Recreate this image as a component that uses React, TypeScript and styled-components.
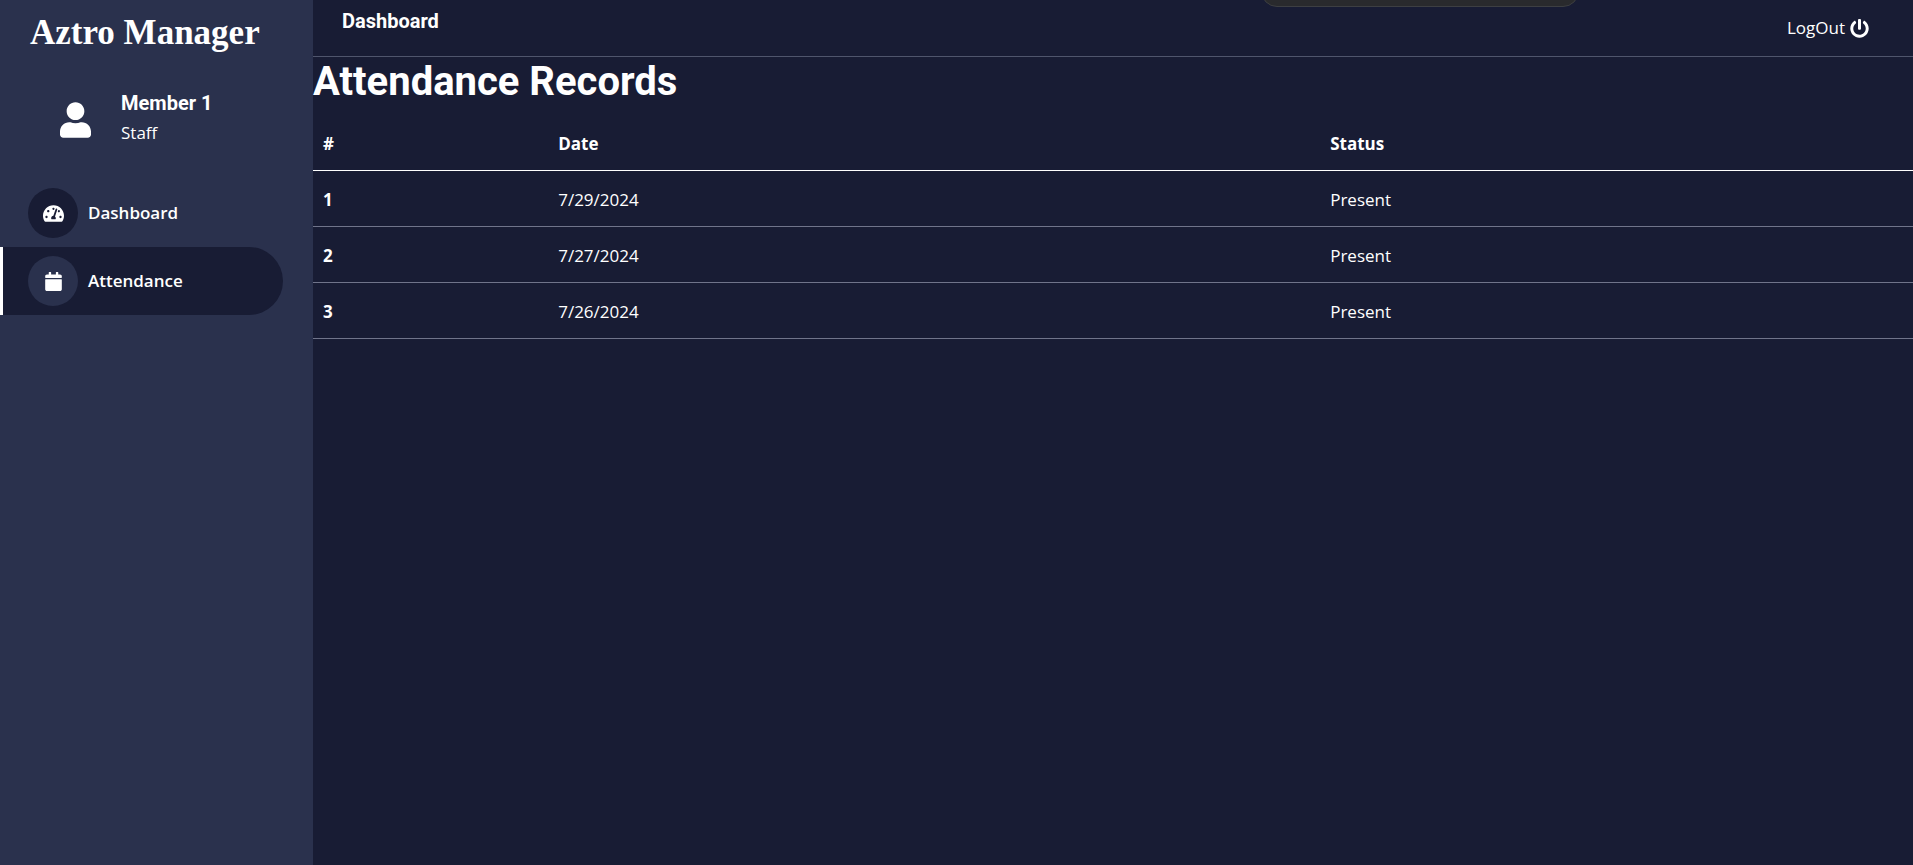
import React from 'react';
import styled, { createGlobalStyle } from 'styled-components';
import { FaUser, FaTachometerAlt, FaCalendar, FaPowerOff } from 'react-icons/fa';

const ink = '#181c34';
const panel = '#2a314d';
const bodyFont = '"Segoe UI", "Open Sans", "Noto Sans", sans-serif';
const headingFont = 'Roboto, sans-serif';

const GlobalStyle = createGlobalStyle`
  *, *::before, *::after { box-sizing: border-box; }
  body {
    margin: 0;
    background: ${ink};
    color: #fff;
    font: 400 17px/26px ${bodyFont};
  }
  h1, h2, h3, p, ul { margin: 0; padding: 0; }
  a { color: inherit; text-decoration: none; }
`;

const Layout = styled.div`
  display: grid;
  grid-template-columns: 313px minmax(0, 1fr);
  min-height: 100vh;
`;

const Sidebar = styled.aside`
  background: ${panel};
`;

const Brand = styled.h2`
  padding: 13px 0 0 30px;
  font: 700 35px/40px "Times New Roman", "Liberation Serif", serif;
`;

const Profile = styled.div`
  display: flex;
  align-items: center;
  gap: 30px;
  padding: 35px 0 0 60px;
`;

const Avatar = styled(FaUser)`
  width: 31px;
  height: 36px;
  margin-top: 4px;
`;

const MemberName = styled.h3`
  font: 700 20px/30px ${headingFont};
`;

const Role = styled.p`
  line-height: 30px;
`;

const Menu = styled.ul`
  padding: 31px 30px 0 0;
  list-style: none;
`;

const MenuLink = styled.a<{ $active?: boolean }>`
  display: flex;
  align-items: center;
  gap: 10px;
  height: 68px;
  padding-left: 25px;
  border-left: 3px solid ${(p) => (p.$active ? '#fff' : 'transparent')};
  border-radius: 0 34px 34px 0;
  background: ${(p) => (p.$active ? ink : 'transparent')};
  font-weight: 600;
`;

const MenuIcon = styled.span<{ $active?: boolean }>`
  display: grid;
  place-items: center;
  width: 50px;
  height: 50px;
  border-radius: 50%;
  background: ${(p) => (p.$active ? panel : ink)};

  svg { width: 21px; height: 19px; }
`;

const Main = styled.main`
  min-width: 0;
`;

const TopBar = styled.header`
  display: flex;
  justify-content: space-between;
  height: 57px;
  padding: 0 44px 0 29px;
  border-bottom: 1px solid #4f556c;
`;

const PageName = styled.h2`
  padding-top: 9px;
  font: 700 20px/24px ${headingFont};
`;

const LogOut = styled.button`
  display: flex;
  align-items: center;
  gap: 5px;
  padding: 0;
  border: 0;
  background: none;
  color: inherit;
  font: inherit;
  cursor: pointer;

  svg { width: 19px; height: 19px; }
`;

const DropTab = styled.div`
  position: absolute;
  top: 0;
  left: 65.9%;
  width: 318px;
  height: 7px;
  border-radius: 0 0 16px 16px;
  overflow: hidden;

  &::before {
    content: '';
    position: absolute;
    inset: auto 0 0;
    height: 40px;
    border: 1px solid #3d3f42;
    border-radius: 16px;
    background: #292a2d;
  }
`;

const Title = styled.h1`
  padding: 1px 0 8px;
  font: 700 40px/48px ${headingFont};
`;

const Records = styled.table`
  width: 100%;
  border-collapse: collapse;
  table-layout: fixed;
  text-align: left;

  th, td {
    height: 56px;
    padding: 4px 10px 0;
    border-bottom: 1px solid #70748a;
  }
  thead th { border-bottom-color: #fff; }
  th { font-weight: 700; }
`;

const NumberCol = styled.col`width: 14.7%;`;
const DateCol = styled.col`width: 48.25%;`;

const records = [
  { id: 1, date: '7/29/2024', status: 'Present' },
  { id: 2, date: '7/27/2024', status: 'Present' },
  { id: 3, date: '7/26/2024', status: 'Present' },
];

export default function App() {
  return (
    <>
      <GlobalStyle />
      <Layout>
        <Sidebar>
          <Brand>Aztro Manager</Brand>
          <Profile>
            <Avatar />
            <div>
              <MemberName>Member 1</MemberName>
              <Role>Staff</Role>
            </div>
          </Profile>
          <nav>
            <Menu>
              <li>
                <MenuLink href="#dashboard">
                  <MenuIcon><FaTachometerAlt /></MenuIcon>
                  Dashboard
                </MenuLink>
              </li>
              <li>
                <MenuLink href="#attendance" $active aria-current="page">
                  <MenuIcon $active><FaCalendar /></MenuIcon>
                  Attendance
                </MenuLink>
              </li>
            </Menu>
          </nav>
        </Sidebar>
        <Main>
          <TopBar>
            <PageName>Dashboard</PageName>
            <LogOut type="button">LogOut <FaPowerOff /></LogOut>
          </TopBar>
          <Title>Attendance Records</Title>
          <Records>
            <colgroup>
              <NumberCol />
              <DateCol />
              <col />
            </colgroup>
            <thead>
              <tr>
                <th scope="col">#</th>
                <th scope="col">Date</th>
                <th scope="col">Status</th>
              </tr>
            </thead>
            <tbody>
              {records.map((r) => (
                <tr key={r.id}>
                  <th scope="row">{r.id}</th>
                  <td>{r.date}</td>
                  <td>{r.status}</td>
                </tr>
              ))}
            </tbody>
          </Records>
        </Main>
      </Layout>
      <DropTab />
    </>
  );
}
